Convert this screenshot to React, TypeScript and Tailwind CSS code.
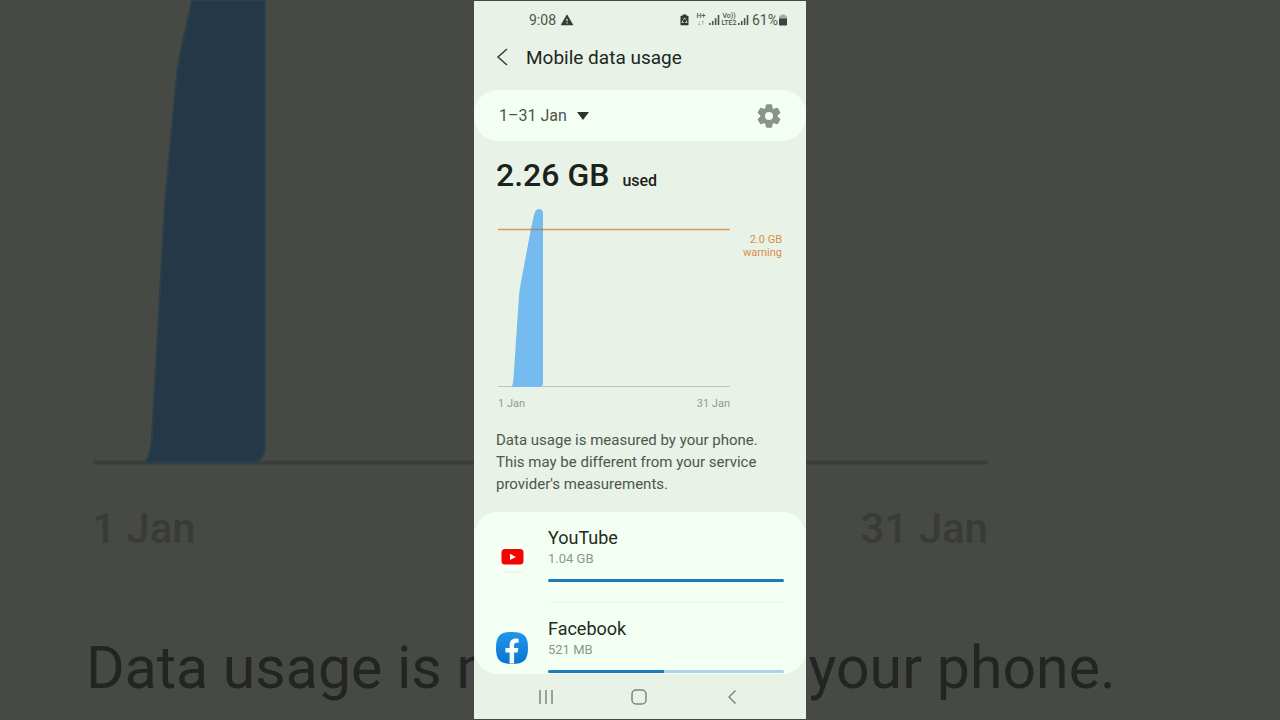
import { useState } from 'react';
import { MdWarning } from 'react-icons/md';

interface AppUsage {
  name: string;
  usage: string;
  percent: number;
  icon: React.ReactNode;
}

const notice = {
  first: 'Data usage is measured by your phone.',
  rest: ["This may be different from your service", "provider's measurements."],
};

function SignalIcon() {
  return (
    <svg viewBox="0 0 11 10" className="h-[10px] w-[11px]" fill="#4c554c">
      <rect x="0" y="8" width="1.6" height="2" />
      <rect x="2.9" y="6" width="1.6" height="4" />
      <rect x="5.8" y="3.2" width="1.6" height="6.8" />
      <rect x="8.7" y="0" width="1.6" height="10" />
    </svg>
  );
}

function BatterySaverIcon() {
  return (
    <svg viewBox="0 0 9 12" className="h-3 w-[9px]">
      <path d="M2.6 0.5h3.8v1.2h1.2q0.9 0 0.9 0.9v7.8q0 0.9-0.9 0.9H1.4q-0.9 0-0.9-0.9V2.6q0-0.9 0.9-0.9h1.2z" fill="#2f372f" />
      <path d="M3.3 5.6L4.5 3.9l1.2 1.7M6.2 6.6l0.8 1.8H5.2M3.8 8.4H2l0.8-1.8" fill="none" stroke="#e8f2e6" strokeWidth="0.9" />
    </svg>
  );
}

function BatteryIcon() {
  return (
    <svg viewBox="0 0 8 12" className="h-3 w-2">
      <path d="M2.2 0.5h3.6v1h1q1.2 0 1.2 1.2V5H0V2.7q0-1.2 1.2-1.2h1z" fill="#a4aca3" />
      <path d="M0 4.4h8v5.9q0 1.2-1.2 1.2H1.2Q0 11.5 0 10.3z" fill="#3c443c" />
    </svg>
  );
}

function GearIcon() {
  return (
    <svg viewBox="0 0 24 24" className="size-6" fill="#8a9489">
      <circle cx="12" cy="12" r="6.3" fill="none" stroke="#8a9489" strokeWidth="4.600" />
      {[0, 60, 120].map((angle) => (
        <g key={angle} transform={`rotate(${angle} 12 12)`}>
          <path d="M9.700 0.300h4.600q0.700 0 0.800 0.700l0.800 4H8.100l0.800-4q0.100-0.700 0.800-0.700z" />
          <path d="M9.700 23.700h4.600q0.700 0 0.800-0.700l0.800-4H8.100l0.800 4q0.100 0.700 0.800 0.700z" />
        </g>
      ))}
    </svg>
  );
}

function YouTubeIcon() {
  return (
    <svg viewBox="0 0 32 32" className="h-8 w-8">
      <path d="M3 20q0 11 9 11h9q8 0 9-9" fill="none" stroke="#e3ebe2" strokeWidth="0.8" />
      <path d="M2 8Q2 1 11 1h10q9 0 9 7v14q0 8-9 8H11q-9 0-9-8z" fill="#f7fff7" />
      <rect x="5.500" y="8" width="22" height="15.500" rx="3.500" fill="#f50305" />
      <path d="M14 12.800v6.200l6-3.100z" fill="#fff3f0" />
    </svg>
  );
}

function FacebookIcon() {
  return (
    <svg viewBox="0 0 32 32" className="h-8 w-8">
      <defs>
        <linearGradient id="fb" x1="0" y1="0" x2="0" y2="1">
          <stop offset="0" stopColor="#2098e8" />
          <stop offset="1" stopColor="#0a72d4" />
        </linearGradient>
      </defs>
      <path d="M16 0C28 0 32 4 32 16S28 32 16 32 0 28 0 16 4 0 16 0z" fill="url(#fb)" />
      <path d="M13.6 31.5V20.6H9.4V16h4.2v-3.2c0-4 2.400-6.400 6-6.400 1.100 0 2.200 0.100 3 0.300v4h-2c-2 0-2.500 1-2.500 2.400V16h4.300l-0.800 4.600h-3.500v10.900z" fill="#f5fff8" />
    </svg>
  );
}

const apps: AppUsage[] = [
  { name: 'YouTube', usage: '1.04 GB', percent: 100, icon: <YouTubeIcon /> },
  { name: 'Facebook', usage: '521 MB', percent: 49, icon: <FacebookIcon /> },
];

// Enlarged, dimmed copy of the chart that fills the space behind the phone
function Backdrop() {
  return (
    <div aria-hidden="true" className="absolute inset-0 overflow-hidden text-[#383b38]">
      <div className="mx-auto w-[1280px] pl-[86px]">
        <svg viewBox="0 0 902 468" className="h-[468px] w-[902px]">
          <path d="M7 462.500H902" stroke="#3b3e3b" strokeWidth="4" />
          <path d="M106 0L94 55Q91 70 90 84L79 202L66 436Q65 454 59 463H166Q179 461 179 446V0z" fill="#243847" stroke="#2d3f49" strokeWidth="2" />
        </svg>
        <div className="flex w-[902px] justify-between pt-9 pl-[6px] text-[42px] leading-[50px] font-medium">
          <span>1 Jan</span>
          <span>31 Jan</span>
        </div>
        <p className="pt-20 text-[59px] leading-[68px] whitespace-nowrap text-[#222522]">{notice.first}</p>
      </div>
    </div>
  );
}

function StatusBar() {
  return (
    <div className="flex h-[38px] items-center pr-[19px] pl-[55px] text-[14px] leading-4 text-[#4c554c]">
      <span>9:08</span>
      <MdWarning className="ml-1 size-[14px] text-[#343c34]" />
      <div className="ml-auto flex items-center">
        <BatterySaverIcon />
        <div className="ml-[6px] flex w-[12px] flex-col items-center text-[7px] leading-[7px] font-medium">
          <span>H+</span>
          <span>↓↑</span>
        </div>
        <span className="ml-[2px]"><SignalIcon /></span>
        <div className="flex w-[18px] flex-col items-center text-[7px] leading-[7px] font-medium">
          <span>Vo))</span>
          <span>LTE2</span>
        </div>
        <SignalIcon />
        <span className="mr-px ml-[3px]">61%</span>
        <BatteryIcon />
      </div>
    </div>
  );
}

function UsageChart() {
  return (
    <div className="flex px-6 pt-[11px]">
      <div className="w-[232px]">
        <svg viewBox="0 0 232 185" className="h-[185px] w-[232px]">
          <path d="M0 182.500H232" stroke="#bcc6bb" strokeWidth="1" />
          <path d="M13 183Q15 181 15.300 177L21 92Q21.300 87 22.300 82L32.700 26L36 11Q37.500 5 41 5Q45 5 45 10V179Q45 183 41 183z" fill="#76bbef" />
          <path d="M0 25.500H232" stroke="#d79a5e" strokeWidth="1.500" />
          <path d="M33 25.500H45" stroke="#83939a" strokeWidth="1.500" />
        </svg>
        <div className="flex justify-between pt-2 text-[11px] leading-[14px] text-[#929b91]">
          <span>1 Jan</span>
          <span>31 Jan</span>
        </div>
      </div>
      <p className="ml-auto pt-[29px] text-right text-[11px] leading-[13px] text-[#d98d4b]">
        2.0 GB
        <br />
        warning
      </p>
    </div>
  );
}

function AppRow({ app }: { app: AppUsage }) {
  return (
    <li className="flex pr-[22px] pl-[22px]">
      <div className="pt-[29px]">{app.icon}</div>
      <div className="ml-5 h-[91px] flex-1 border-b border-[#ebf5ea] pt-[14px]">
        <h2 className="text-[18px] leading-6 text-[#232a23]">{app.name}</h2>
        <p className="text-[13px] leading-[18px] text-[#8d968c]">{app.usage}</p>
        <div className="mt-[11px] h-[3px] overflow-hidden rounded-full bg-[#aed3e5]">
          <div className="h-full bg-[#1f79bd]" style={{ width: `${app.percent}%` }} />
        </div>
      </div>
    </li>
  );
}

function NavBar() {
  return (
    <nav className="flex h-[45px] shrink-0 items-center justify-between pr-[62px] pl-[60px] text-[#7d867c]">
      <button type="button" aria-label="Recent apps" className="flex size-6 items-center justify-center">
        <svg viewBox="0 0 14 14" className="size-[14px]" stroke="currentColor" strokeWidth="1.5">
          <path d="M1 0v14M7 0v14M13 0v14" />
        </svg>
      </button>
      <button type="button" aria-label="Home" className="flex size-6 items-center justify-center">
        <svg viewBox="0 0 16 16" className="size-4" fill="none" stroke="currentColor" strokeWidth="1.5">
          <rect x="1" y="1" width="14" height="14" rx="4" />
        </svg>
      </button>
      <button type="button" aria-label="Back" className="flex size-6 items-center justify-center">
        <svg viewBox="0 0 8 14" className="h-[14px] w-2" fill="none" stroke="currentColor" strokeWidth="1.5">
          <path d="M7.500 0.500L1 7l6.500 6.500" />
        </svg>
      </button>
    </nav>
  );
}

export default function App() {
  const [period] = useState('1–31 Jan');

  return (
    <div className="relative flex h-screen justify-center overflow-hidden bg-[#474945] py-px font-[Roboto,sans-serif]">
      <Backdrop />
      <main className="relative flex w-[332px] flex-col bg-[#e8f2e6]">
        <StatusBar />

        <header className="flex h-[51px] items-start px-[22px] pt-[6px]">
          <button type="button" aria-label="Navigate up" className="flex h-6 w-[30px] items-center">
            <svg viewBox="0 0 12 18" className="h-[18px] w-3" fill="none" stroke="#343c34" strokeWidth="1.5">
              <path d="M11 1L2 9l9 8" />
            </svg>
          </button>
          <h1 className="text-[19px] leading-[26px] text-[#20271f]">Mobile data usage</h1>
        </header>

        <section className="flex h-[51px] shrink-0 items-center justify-between rounded-[24px] bg-[#f4fff4] px-[25px]">
          <button type="button" className="flex items-center gap-[10px] text-[16px] leading-5 text-[#4b544a]">
            {period}
            <svg viewBox="0 0 12 8" className="h-2 w-3" fill="#2c342b">
              <path d="M0 0h12L6 8z" />
            </svg>
          </button>
          <button type="button" aria-label="Billing cycle settings">
            <GearIcon />
          </button>
        </section>

        <div className="flex items-baseline gap-[13px] px-[22px] pt-4 text-[#1b221a]">
          <span className="text-[32px] leading-9 font-medium">2.26 GB</span>
          <span className="text-[16px] leading-5 font-medium">used</span>
        </div>

        <UsageChart />

        <p className="px-[22px] pt-[18px] text-[15px] leading-[22px] text-[#4e574d]">
          {notice.first}
          {notice.rest.map((line) => (
            <span key={line} className="block">{line}</span>
          ))}
        </p>

        <ul className="mt-[17px] min-h-0 flex-1 overflow-hidden rounded-[24px] bg-[#f4fff4]">
          {apps.map((app) => (
            <AppRow key={app.name} app={app} />
          ))}
        </ul>

        <NavBar />
      </main>
    </div>
  );
}
